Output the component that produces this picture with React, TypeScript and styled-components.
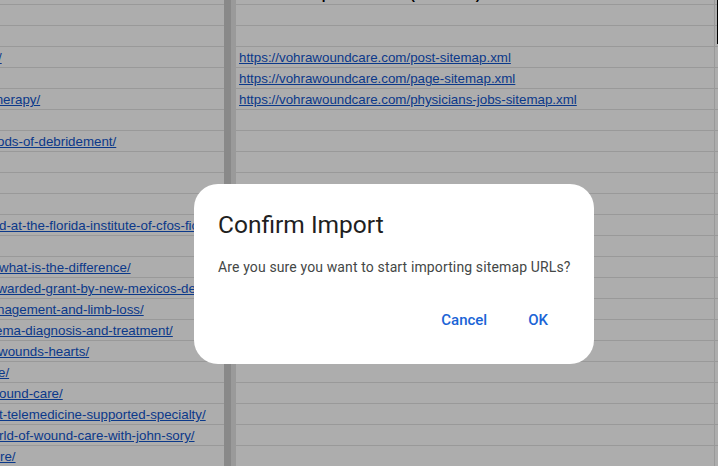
import React from 'react';
import styled, { createGlobalStyle } from 'styled-components';

const GlobalStyle = createGlobalStyle`
  html, body {
    margin: 0;
    padding: 0;
    background: #ffffff;
    overflow: hidden;
  }
  body {
    font-family: 'Liberation Sans', Arial, sans-serif;
  }
`;

const SITE = 'https://vohrawoundcare.com/';

interface IRow {
  tail?: string;
  shift?: number;
  sitemap?: string;
}

const rows: IRow[] = [
  {},
  {},
  { tail: '/', shift: -2, sitemap: 'post-sitemap.xml' },
  { sitemap: 'page-sitemap.xml' },
  { tail: 'therapy/', shift: -8, sitemap: 'physicians-jobs-sitemap.xml' },
  {},
  { tail: 'ods-of-debridement/', shift: -3 },
  {},
  {},
  {},
  { tail: 'd-at-the-florida-institute-of-cfos-fiction/', shift: -1 },
  {},
  { tail: 'what-is-the-difference/', shift: -1 },
  { tail: 'awarded-grant-by-new-mexicos-department/', shift: -10 },
  { tail: 'nagement-and-limb-loss/', shift: -3 },
  { tail: 'ema-diagnosis-and-treatment/', shift: -5 },
  { tail: 'wounds-hearts/', shift: -2 },
  { tail: 'e/', shift: -2 },
  { tail: 'ound-care/', shift: -1 },
  { tail: 't-telemedicine-supported-specialty/', shift: -1 },
  { tail: 'rld-of-wound-care-with-john-sory/', shift: -1 },
  { tail: 're/', shift: 0 },
];

export default function App() {
  return (
    <>
      <GlobalStyle />
      <S.Sheet>
        <S.Column $width={224}>
          <S.Row />
          {rows.map((r, i) => (
            <S.Row key={i}>
              {r.tail && <S.Link $shift={r.shift ?? 0}>{r.tail}</S.Link>}
            </S.Row>
          ))}
        </S.Column>
        <S.Divider>
          <div className='dark' />
          <div className='light' />
        </S.Divider>
        <S.Column $width={479} $edge>
          <S.Row>
            <S.Header>Sitemap Index URLs (Extracted)</S.Header>
          </S.Row>
          {rows.map((r, i) => (
            <S.Row key={i}>
              {r.sitemap && <S.Link $shift={3}>{SITE + r.sitemap}</S.Link>}
            </S.Row>
          ))}
        </S.Column>
        <S.EdgeColumn>
          <S.Row />
          {rows.map((_, i) => (
            <S.Row key={i} />
          ))}
          <S.Selection />
        </S.EdgeColumn>
      </S.Sheet>

      <S.Overlay>
        <S.Dialog role='dialog' aria-labelledby='confirm-title'>
          <S.Title id='confirm-title'>Confirm Import</S.Title>
          <S.Message>Are you sure you want to start importing sitemap URLs?</S.Message>
          <S.Actions>
            <S.TextButton>Cancel</S.TextButton>
            <S.TextButton>OK</S.TextButton>
          </S.Actions>
        </S.Dialog>
      </S.Overlay>
    </>
  );
}

const S = {
  Sheet: styled.div`
    display: flex;
    height: 482px;
    margin-top: -16px;
    overflow: hidden;
    font-size: 13.33px;
    color: #000;
  `,
  Column: styled.div<{ $width: number; $edge?: boolean }>`
    flex: 0 0 ${(p) => p.$width}px;
    width: ${(p) => p.$width}px;
    overflow: hidden;
    border-right: ${(p) => (p.$edge ? '1px solid #e2e2e2' : 'none')};
    box-sizing: border-box;
  `,
  EdgeColumn: styled.div`
    position: relative;
    flex: 1 1 auto;
    overflow: hidden;
  `,
  Row: styled.div`
    height: 21px;
    box-sizing: border-box;
    border-bottom: 1px solid #e2e2e2;
    padding-top: 1px;
    line-height: 19px;
    white-space: nowrap;
    overflow: hidden;
  `,
  Link: styled.span<{ $shift: number }>`
    display: inline-block;
    margin-left: ${(p) => p.$shift}px;
    color: #1155cc;
    text-decoration: underline;
  `,
  Header: styled.span`
    display: inline-block;
    margin-left: 42px;
    font-weight: 700;
  `,
  Divider: styled.div`
    flex: 0 0 12px;
    display: flex;
    .dark {
      width: 7px;
      background: #cbcbcb;
    }
    .light {
      width: 5px;
      background: #e4e4e4;
    }
  `,
  Selection: styled.div`
    position: absolute;
    top: 16px;
    right: 0;
    width: 1px;
    height: 44px;
    background: #000;
  `,
  Overlay: styled.div`
    position: fixed;
    inset: 0;
    background: rgba(0, 0, 0, 0.32);
    display: flex;
    align-items: flex-start;
    padding: 184px 0 0 194px;
    box-sizing: border-box;
  `,
  Dialog: styled.div`
    width: 400px;
    height: 180px;
    box-sizing: border-box;
    padding: 26px 0 0 24px;
    background: #ffffff;
    border-radius: 24px;
    display: flex;
    flex-direction: column;
    font-family: Roboto, 'Noto Sans', sans-serif;
  `,
  Title: styled.h2`
    margin: 0;
    font-size: 24.5px;
    line-height: 30px;
    font-weight: 400;
    color: #1f1f1f;
  `,
  Message: styled.p`
    margin: 17px 0 0;
    font-size: 14px;
    line-height: 20px;
    letter-spacing: 0.13px;
    color: #444746;
  `,
  Actions: styled.div`
    display: flex;
    justify-content: flex-end;
    gap: 17px;
    margin: 23px 34px 0 0;
  `,
  TextButton: styled.button`
    height: 40px;
    padding: 0 12px;
    border: none;
    background: transparent;
    font-family: Roboto, 'Noto Sans', sans-serif;
    font-size: 15px;
    font-weight: 500;
    color: #1a64d6;
    cursor: pointer;
  `,
};
